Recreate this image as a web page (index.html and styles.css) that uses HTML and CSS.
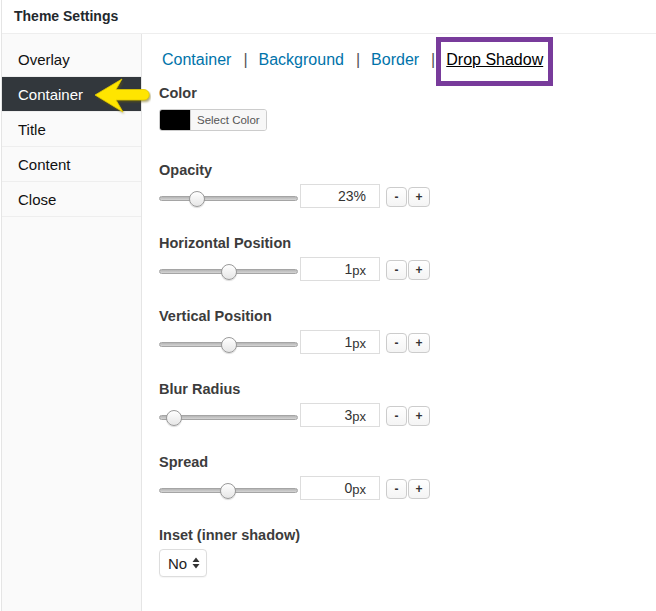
FILE: index.html
```html
<!DOCTYPE html>
<html lang="en">
<head>
<meta charset="utf-8">
<title>Theme Settings</title>
<link rel="stylesheet" href="styles.css">
</head>
<body>
<div class="panel">
  <div class="header">Theme Settings</div>
  <div class="main">
    <nav class="sidebar">
      <div class="nav-item">Overlay</div>
      <div class="nav-item active">Container</div>
      <div class="nav-item">Title</div>
      <div class="nav-item">Content</div>
      <div class="nav-item">Close</div>
    </nav>
    <div class="content">
      <div class="tabs">
        <a class="tab">Container</a><span class="sep">|</span>
        <a class="tab">Background</a><span class="sep">|</span>
        <a class="tab">Border</a><span class="sep">|</span>
        <a class="tab current">Drop Shadow</a>
      </div>

      <div class="field field-color">
        <div class="label">Color</div>
        <div class="color-picker"><span class="swatch"></span><span class="picker-btn">Select Color</span></div>
      </div>

      <div class="field">
        <div class="label">Opacity</div>
        <div class="range-row">
          <div class="slider"><div class="track"></div><div class="knob" style="left:30px"></div></div>
          <div class="num">23%</div>
          <button class="step">-</button><button class="step plus">+</button>
        </div>
      </div>

      <div class="field">
        <div class="label">Horizontal Position</div>
        <div class="range-row">
          <div class="slider"><div class="track"></div><div class="knob" style="left:62px"></div></div>
          <div class="num">1<span class="unit">px</span></div>
          <button class="step">-</button><button class="step plus">+</button>
        </div>
      </div>

      <div class="field">
        <div class="label">Vertical Position</div>
        <div class="range-row">
          <div class="slider"><div class="track"></div><div class="knob" style="left:62px"></div></div>
          <div class="num">1<span class="unit">px</span></div>
          <button class="step">-</button><button class="step plus">+</button>
        </div>
      </div>

      <div class="field">
        <div class="label">Blur Radius</div>
        <div class="range-row">
          <div class="slider"><div class="track"></div><div class="knob" style="left:7px"></div></div>
          <div class="num">3<span class="unit">px</span></div>
          <button class="step">-</button><button class="step plus">+</button>
        </div>
      </div>

      <div class="field">
        <div class="label">Spread</div>
        <div class="range-row">
          <div class="slider"><div class="track"></div><div class="knob" style="left:61px"></div></div>
          <div class="num">0<span class="unit">px</span></div>
          <button class="step">-</button><button class="step plus">+</button>
        </div>
      </div>

      <div class="field">
        <div class="label">Inset (inner shadow)</div>
        <div class="select">
          <span>No</span>
          <svg class="updown" width="8" height="12" viewBox="0 0 8 12"><path d="M4 0.5 L7.5 5 L0.5 5 Z M4 11.5 L7.5 7 L0.5 7 Z" fill="#333"/></svg>
        </div>
      </div>
    </div>
  </div>

  <svg class="arrow" width="62" height="46" viewBox="0 0 62 46">
    <defs>
      <filter id="sh" x="-20%" y="-20%" width="140%" height="140%">
        <feGaussianBlur stdDeviation="1.2"/>
      </filter>
    </defs>
    <path d="M6 23 L33 7 L27 17.5 L55 17.5 A5.25 5.25 0 0 1 55 28 L27 28 L34 40 Z" fill="#6b5e00" opacity="0.55" transform="translate(1.5 2)" filter="url(#sh)" stroke-linejoin="round"/>
    <path d="M6 23 L33 7 L27 17.5 L55 17.5 A5.25 5.25 0 0 1 55 28 L27 28 L34 40 Z" fill="#ffe500" stroke="#e0c800" stroke-width="0.8" stroke-linejoin="round"/>
  </svg>
</div>
</body>
</html>
```

FILE: styles.css
```css
html, body {
  margin: 0;
  padding: 0;
  height: 100%;
  background: #fff;
}

body {
  font-family: "Liberation Sans", Arial, Helvetica, sans-serif;
  color: #23282d;
}

.panel {
  position: relative;
  margin-left: 1px;
  border-left: 1px solid #e5e5e5;
  min-height: 100%;
  display: flex;
  flex-direction: column;
}

.header {
  height: 33px;
  line-height: 33px;
  padding-left: 12px;
  font-size: 14px;
  font-weight: bold;
  color: #23282d;
  border-bottom: 1px solid #eee;
}

.main {
  flex: 1;
  display: flex;
}

.sidebar {
  width: 139px;
  flex: none;
  background: #fafafa;
  border-right: 1px solid #e5e5e5;
  padding-top: 8px;
}

.nav-item {
  height: 34px;
  line-height: 36px;
  padding-left: 16px;
  font-size: 15px;
  color: #111;
  border-bottom: 1px solid #eee;
}

.nav-item.active {
  background: #32373c;
  color: #fff;
}

.content {
  flex: 1;
  padding: 16px 16px 0 17px;
}

.tabs {
  display: flex;
  align-items: center;
  height: 20px;
  line-height: 20px;
  font-size: 16px;
  padding-left: 3px;
}

.tab {
  color: #0073aa;
  text-decoration: none;
}

.tab.current {
  position: relative;
  color: #000;
  text-decoration: underline;
}

.tab.current::after {
  content: "";
  position: absolute;
  left: -10px;
  right: -10px;
  top: -13px;
  bottom: -16px;
  border: 5px solid #783b9b;
}

.sep {
  color: #555;
  margin: 0 11px 0 12px;
}

.field {
  margin-bottom: 25px;
}

.field-color {
  margin-top: 13px;
  margin-bottom: 29px;
}

.label {
  font-size: 14.5px;
  font-weight: bold;
  line-height: 20px;
  color: #3c3c3c;
  margin-bottom: 4px;
}

.color-picker {
  display: flex;
  width: 106px;
  height: 20px;
  margin-top: 6px;
  border: 1px solid #ccc;
  border-radius: 3px;
  overflow: hidden;
}

.swatch {
  width: 30px;
  background: #000;
  flex: none;
}

.picker-btn {
  flex: 1;
  background: #f7f7f7;
  border-left: 1px solid #ccc;
  font-size: 11.5px;
  line-height: 20px;
  color: #555;
  padding-left: 6px;
}

.range-row {
  display: flex;
  align-items: flex-start;
  height: 24px;
}

.slider {
  position: relative;
  width: 139px;
  height: 24px;
  margin-right: 2px;
  flex: none;
}

.track {
  position: absolute;
  left: 0;
  right: 0;
  top: 12px;
  height: 3px;
  border: 1px solid #a5a5a5;
  border-radius: 3px;
  background: linear-gradient(#b5b5b5, #d5d5d5);
}

.knob {
  position: absolute;
  top: 7px;
  width: 14px;
  height: 14px;
  border: 1px solid #9a9a9a;
  border-radius: 50%;
  background: linear-gradient(#ffffff, #e6e6e6);
  box-shadow: 0 1px 1px rgba(0, 0, 0, 0.15);
}

.num {
  width: 80px;
  height: 24px;
  box-sizing: border-box;
  border: 1px solid #ddd;
  background: #fff;
  text-align: right;
  padding-right: 13px;
  font-size: 14px;
  line-height: 22px;
  color: #333;
  flex: none;
}

.unit {
  font-size: 13px;
  position: relative;
  top: 1px;
}

.step {
  height: 20px;
  width: 21px;
  margin-top: 3px;
  padding: 0;
  border: 1px solid #ccc;
  border-radius: 4px;
  background: linear-gradient(#ffffff, #f4f4f4);
  font-family: "Liberation Sans", Arial, sans-serif;
  font-size: 12px;
  font-weight: bold;
  line-height: 18px;
  color: #333;
  margin-left: 6px;
}

.step.plus {
  width: 22px;
  margin-left: 1px;
}

.select {
  display: flex;
  align-items: center;
  justify-content: space-between;
  width: 48px;
  height: 28px;
  box-sizing: border-box;
  border: 1px solid #ddd;
  border-radius: 4px;
  background: #fff;
  padding: 0 6px 0 8px;
  font-size: 15px;
  color: #222;
  box-shadow: 0 1px 1px rgba(0, 0, 0, 0.04);
}

.updown {
  display: block;
}

.arrow {
  position: absolute;
  left: 87px;
  top: 72px;
}
```
